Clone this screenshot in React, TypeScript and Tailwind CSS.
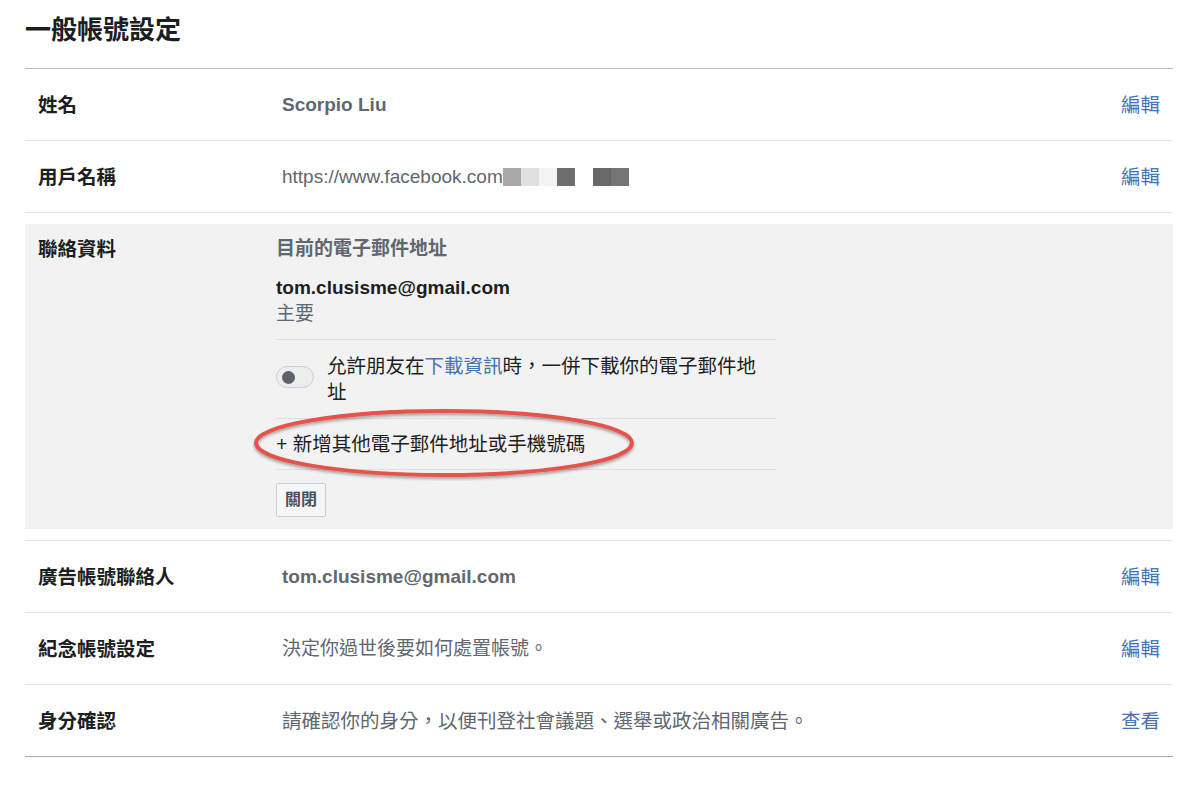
import React from "react";

const font = {
  fontFamily:
    '"Liberation Sans", Arial, "Noto Sans CJK TC", "Noto Sans CJK SC", sans-serif',
};

function Row({
  label,
  value,
  action,
  bold,
}: {
  label: string;
  value: React.ReactNode;
  action: string;
  bold?: boolean;
}) {
  return (
    <div className="flex h-[72px] items-center border-b border-[#e5e6e9] px-[13px] pt-[2px]">
      <div className="w-[244px] shrink-0 text-[19.5px] font-bold text-[#1c1e21]">
        {label}
      </div>
      <div
        className={`flex-1 text-[19px] text-[#606770] ${bold ? "font-bold" : ""}`}
      >
        {value}
      </div>
      <a className="text-[19.5px] text-[#4472b8]">{action}</a>
    </div>
  );
}

function Mosaic() {
  const cells = [
    "#a8a8a8",
    "#e0e0e2",
    "#f3f3f5",
    "#6e6e6e",
    "#ffffff",
    "#68686c",
    "#757575",
  ];
  return (
    <span className="inline-flex translate-y-[3px] align-baseline">
      {cells.map((c, i) => (
        <span key={i} className="inline-block h-[18px] w-[18px]" style={{ background: c }} />
      ))}
    </span>
  );
}

export default function App() {
  return (
    <div className="min-h-screen bg-white" style={font}>
      <div className="mx-[25px] w-[1148px]">
        <h1 className="pt-[15px] pb-[23px] text-[26px] font-bold leading-[30px] text-[#1c1e21]">
          一般帳號設定
        </h1>
        <div className="border-t border-[#b8b8b8]">
          <Row label="姓名" value="Scorpio Liu" action="編輯" bold />
          <Row
            label="用戶名稱"
            value={
              <span className="whitespace-nowrap">
                https://www.facebook.com
                <Mosaic />
              </span>
            }
            action="編輯"
          />

          <div className="border-b border-[#e5e6e9] py-[11px]">
            <div className="flex bg-[#f2f2f2] px-[13px] pt-[12px] pb-[12px]">
              <div className="w-[238px] shrink-0 text-[19.5px] font-bold leading-[26px] text-[#1c1e21]">
                聯絡資料
              </div>
              <div className="w-[500px] text-[19px] leading-[26px]">
                <div className="font-bold text-[#606770]">目前的電子郵件地址</div>
                <div className="mt-[13px] font-bold text-[#1c1e21]">
                  tom.clusisme@gmail.com
                </div>
                <div className="text-[#606770]">主要</div>
                <div className="mt-[12px] flex items-center border-t border-b border-[#dddfe2] pt-[13px] pb-[13px]">
                  <div className="mr-[13px] flex h-[22px] w-[38px] shrink-0 -translate-y-[2px] items-center rounded-full border border-[#ccd0d5] bg-[#ebedf0] px-[5px]">
                    <div className="h-[13px] w-[13px] rounded-full bg-[#5f6368]" />
                  </div>
                  <p className="w-[440px] text-[19.5px] text-[#1c1e21]">
                    允許朋友在<a className="text-[#4472b8]">下載資訊</a>時，一併下載你的電子郵件地址
                  </p>
                </div>
                <div className="relative border-b border-[#dddfe2] py-[12px] text-[19.5px] text-[#1c1e21]">
                  + 新增其他電子郵件地址或手機號碼
                  <svg
                    className="pointer-events-none absolute left-[-24px] top-[-12px]"
                    width="386"
                    height="74"
                    viewBox="0 0 386 74"
                  >
                    <defs>
                      <filter id="sh" x="-10%" y="-20%" width="120%" height="150%">
                        <feDropShadow dx="0" dy="2" stdDeviation="1.5" floodColor="#000" floodOpacity="0.35" />
                      </filter>
                    </defs>
                    <ellipse
                      cx="192"
                      cy="36"
                      rx="188"
                      ry="32"
                      fill="none"
                      stroke="#e5534b"
                      strokeWidth="4"
                      filter="url(#sh)"
                    />
                  </svg>
                </div>
                <button className="mt-[13px] h-[34px] w-[50px] rounded-[2px] border border-[#ccd0d5] bg-[#f5f6f7] text-[16px] font-bold text-[#4b4f56]">
                  關閉
                </button>
              </div>
            </div>
          </div>

          <Row label="廣告帳號聯絡人" value="tom.clusisme@gmail.com" action="編輯" bold />
          <Row label="紀念帳號設定" value="決定你過世後要如何處置帳號。" action="編輯" />
          <div className="flex h-[72px] items-center border-b border-[#a9a9a9] px-[13px] pt-[2px]">
            <div className="w-[244px] shrink-0 text-[19.5px] font-bold text-[#1c1e21]">
              身分確認
            </div>
            <div className="flex-1 text-[19.5px] text-[#606770]">
              請確認你的身分，以便刊登社會議題、選舉或政治相關廣告。
            </div>
            <a className="text-[19.5px] text-[#4472b8]">查看</a>
          </div>
        </div>
      </div>
    </div>
  );
}
